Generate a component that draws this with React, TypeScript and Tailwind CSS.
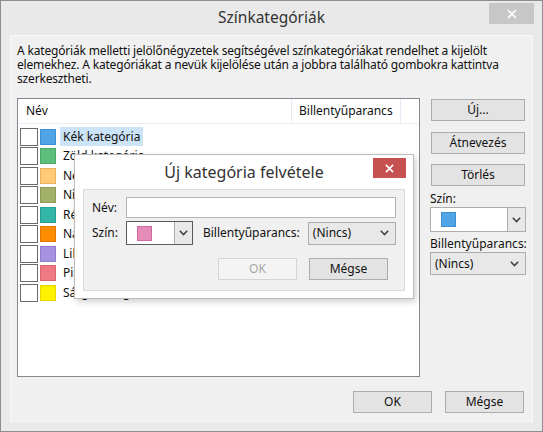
import React from "react";

const FONT = { fontFamily: '"Noto Sans", "Open Sans", sans-serif' };

const categories = [
  { name: "Kék kategória", color: "bg-[#4fa5e6]", border: "border-[#3f8fd0]", selected: true },
  { name: "Zöld kategória", color: "bg-[#5ebf7c]", border: "border-[#4aa868]" },
  { name: "Nem fontos", color: "bg-[#ffcb78]", border: "border-[#e8b460]" },
  { name: "Nincs kész", color: "bg-[#a3b06a]", border: "border-[#8c9a55]" },
  { name: "Régi ügyek", color: "bg-[#33b5a8]", border: "border-[#289e92]" },
  { name: "Narancssárga kategória", color: "bg-[#ff8c00]", border: "border-[#e07800]" },
  { name: "Lila kategória", color: "bg-[#a693e0]", border: "border-[#9080cc]" },
  { name: "Piros kategória", color: "bg-[#f07a84]", border: "border-[#d86670]" },
  { name: "Sárga kategória", color: "bg-[#fff100]", border: "border-[#e6d800]" },
];

function Chevron({ className = "" }: { className?: string }) {
  return (
    <svg width="9" height="6" viewBox="0 0 9 6" className={className}>
      <path d="M0.8 0.8 L4.5 4.6 L8.2 0.8" fill="none" stroke="#444" strokeWidth="1.6" />
    </svg>
  );
}

function Btn({
  children,
  className = "",
  disabled = false,
}: {
  children: React.ReactNode;
  className?: string;
  disabled?: boolean;
}) {
  return (
    <div
      className={
        "flex h-[22px] items-center justify-center border text-[12px] " +
        (disabled
          ? "border-[#d5d5d5] bg-[#f4f4f4] text-[#a6a6a6] "
          : "border-[#acacac] bg-[#e3e3e3] text-[#111] ") +
        className
      }
    >
      {children}
    </div>
  );
}

function ColorSelect({ swatch, className = "", focused = false }: { swatch: string; className?: string; focused?: boolean }) {
  return (
    <div
      className={
        "flex bg-white border " + (focused ? "border-[#5a5a5a]" : "border-[#acacac]") + " " + className
      }
    >
      <div className="flex flex-1 items-center pl-[10px]">
        <div className={"h-[15px] w-[15px] border " + swatch} />
      </div>
      <div className="flex w-[18px] items-center justify-center border-l border-[#acacac] bg-[#e8e8e8]">
        <Chevron />
      </div>
    </div>
  );
}

function KeySelect({ className = "" }: { className?: string }) {
  return (
    <div className={"flex items-center justify-between border border-[#acacac] bg-[#e8e8e8] pl-[4px] pr-[6px] text-[12px] " + className}>
      <span>(Nincs)</span>
      <Chevron />
    </div>
  );
}

export default function App() {
  return (
    <div
      style={FONT}
      className="relative flex h-[432px] w-[543px] flex-col border border-[#8e8e8e] bg-[#e9e9e9] text-[#111]"
    >
      {/* outer title bar */}
      <div className="relative flex h-[34px] items-center justify-center">
        <span className="text-[15.5px] text-[#333] pb-[1px]">Színkategóriák</span>
        <div className="absolute right-[8px] top-[2px] flex h-[21px] w-[45px] items-center justify-center bg-[#c7c7c7]">
          <svg width="10" height="10" viewBox="0 0 10 10">
            <path d="M1 1 L9 9 M9 1 L1 9" stroke="#fff" strokeWidth="1.6" />
          </svg>
        </div>
      </div>

      {/* client area */}
      <div className="mx-[9px] flex flex-1 flex-col border border-[#f7f7f7] bg-[#f0f0f0] px-[6px] mb-[9px] w-[523px]">
        <p className="mt-[8px] text-[12px] leading-[14px] tracking-[-0.17px]">
          A kategóriák melletti jelölőnégyzetek segítségével színkategóriákat rendelhet a kijelölt
          elemekhez. A kategóriákat a nevük kijelölése után a jobbra található gombokra kattintva
          szerkesztheti.
        </p>

        <div className="mt-[12px] flex gap-[10px]">
          {/* list */}
          <div className="h-[279px] w-[404px] border border-[#828790] bg-white">
            <div className="flex h-[25px] items-center border-b border-[#e8eef6] text-[12px]">
              <div className="w-[273px] pl-[8px]">Név</div>
              <div className="h-full border-l border-[#e3ebf5]" />
              <div className="w-[108px] pl-[7px]">Billentyűparancs</div>
              <div className="h-full border-l border-[#e3ebf5]" />
            </div>
            <div className="mt-[3px] flex flex-col">
              {categories.map((c) => (
                <div key={c.name} className="flex h-[19.5px] items-center pl-[2px]">
                  <div className="h-[18px] w-[18px] border-[1.5px] border-[#6a6a6a] bg-white" />
                  <div className={"ml-[2px] h-[16px] w-[16px] border " + c.color + " " + c.border} />
                  <div
                    className={
                      "ml-[4px] flex h-[19px] items-center px-[3px] text-[12px] " +
                      (c.selected ? "bg-[#cce4f7]" : "")
                    }
                  >
                    {c.name}
                  </div>
                </div>
              ))}
            </div>
          </div>

          {/* right column */}
          <div className="mt-[1px] flex w-[96px] flex-col">
            <Btn className="mx-[1px]">Új...</Btn>
            <Btn className="mx-[1px] mt-[11px]">Átnevezés</Btn>
            <Btn className="mx-[1px] mt-[10px]">Törlés</Btn>
            <div className="mt-[5px] text-[12px] leading-[16px]">Szín:</div>
            <ColorSelect swatch="bg-[#4fa5e6] border-[#3f8fd0]" className="h-[25px]" />
            <div className="mt-[4px] text-[12px] leading-[16px]">Billentyűparancs:</div>
            <KeySelect className="h-[23px]" />
          </div>
        </div>

        <div className="mt-[14px] flex justify-end gap-[13px] pr-[2px]">
          <Btn className="w-[79px]">OK</Btn>
          <Btn className="w-[79px]">Mégse</Btn>
        </div>
      </div>

      {/* overlaid dialog */}
      <div className="absolute left-[73px] top-[153px] flex h-[145px] w-[340px] flex-col border border-[#bcbcbc] bg-white shadow-[2px_3px_6px_rgba(0,0,0,0.18)]">
        <div className="relative flex h-[34px] items-center justify-center">
          <span className="text-[16px] text-[#333]">Új kategória felvétele</span>
          <div className="absolute right-[7px] top-[3px] flex h-[20px] w-[33px] items-center justify-center bg-[#c75050]">
            <svg width="9" height="9" viewBox="0 0 10 10">
              <path d="M1 1 L9 9 M9 1 L1 9" stroke="#fff" strokeWidth="1.8" />
            </svg>
          </div>
        </div>
        <div className="mx-[8px] mb-[7px] flex flex-1 flex-col border border-[#dadada] bg-[#f0f0f0] px-[8px] pt-[7px]">
          <div className="flex items-center">
            <span className="w-[34px] text-[12px]">Név:</span>
            <div className="h-[21px] w-[273px] border border-[#b5b5b5] bg-white" />
          </div>
          <div className="mt-[3px] flex items-center">
            <span className="w-[34px] text-[12px]">Szín:</span>
            <ColorSelect swatch="bg-[#e48bb8] border-[#d06a9e]" className="h-[24px] w-[68px]" focused />
            <span className="ml-[10px] w-[106px] text-[12px]">Billentyűparancs:</span>
            <KeySelect className="h-[23px] w-[89px]" />
          </div>
          <div className="mt-[13px] flex justify-end gap-[12px] pr-[8px]">
            <Btn className="w-[79px]" disabled>OK</Btn>
            <Btn className="w-[79px]">Mégse</Btn>
          </div>
        </div>
      </div>
    </div>
  );
}
